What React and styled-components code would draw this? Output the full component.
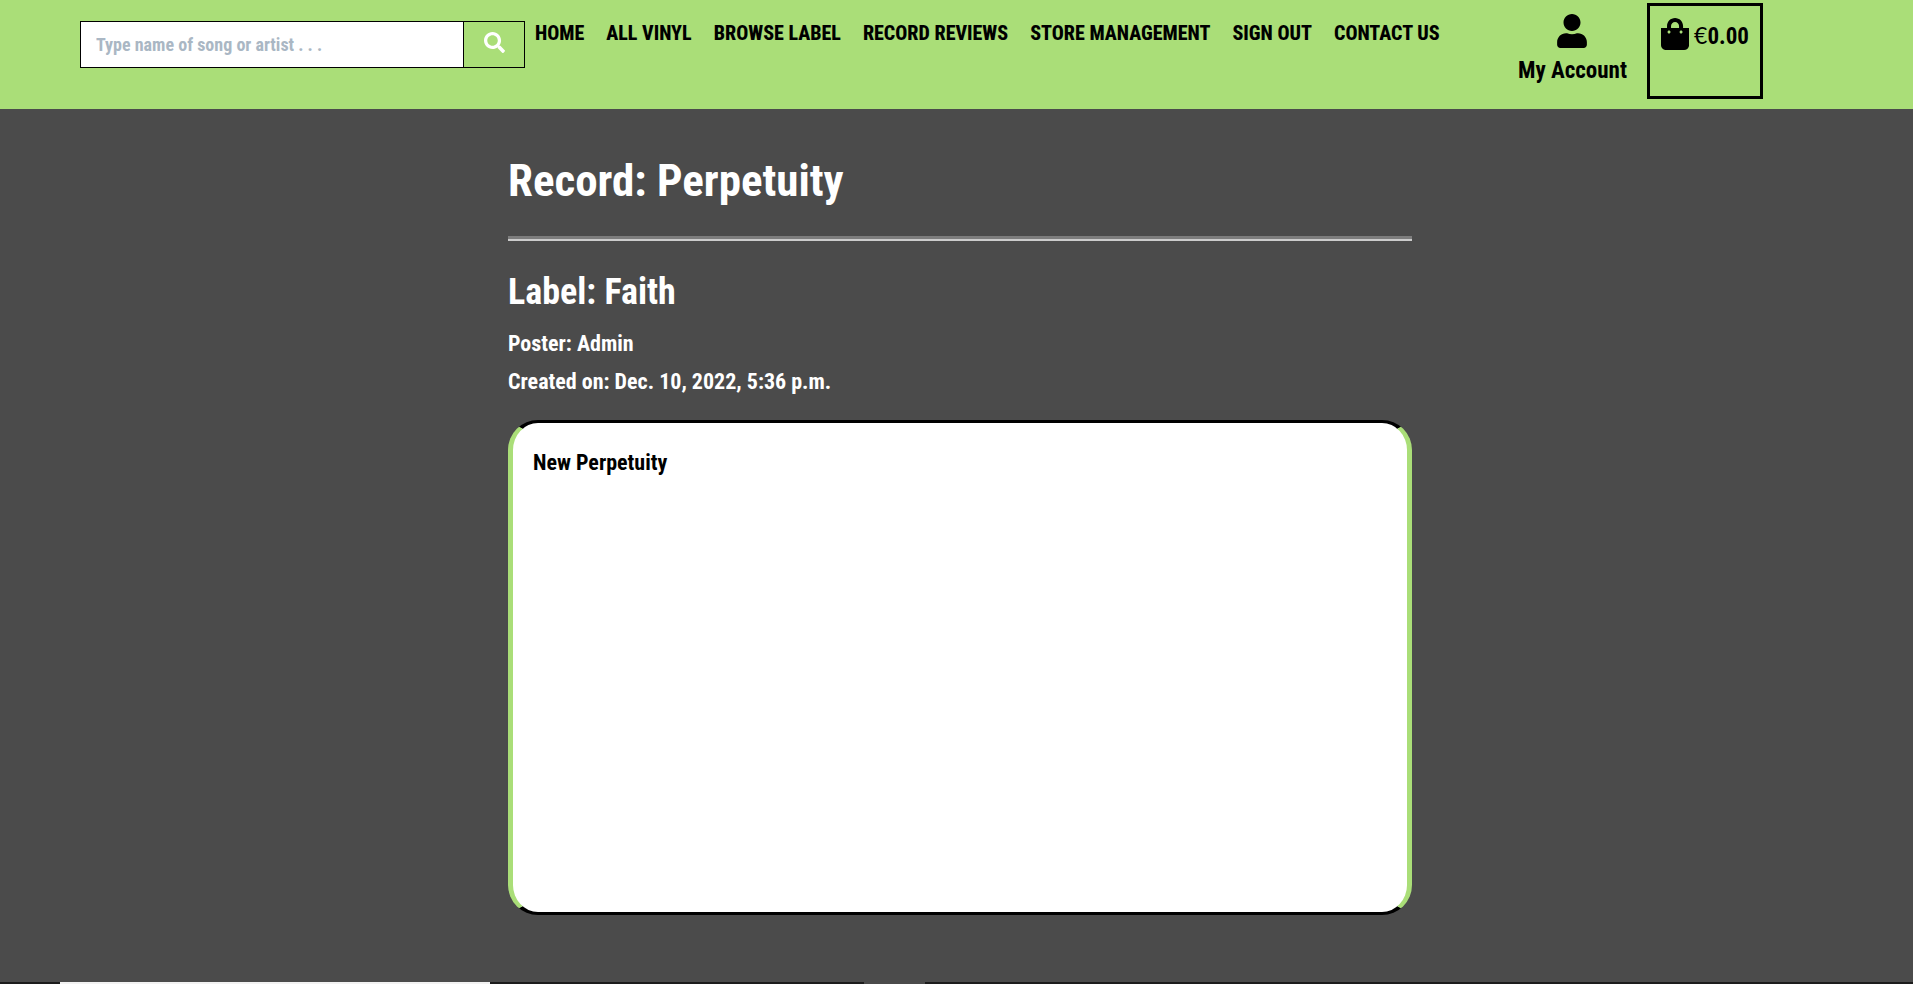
import React from "react";
import styled, { createGlobalStyle } from "styled-components";

const green = "#aade78";
const ink = "#000000";
const slate = "#4b4b4b";

const GlobalStyle = createGlobalStyle`
  *, *::before, *::after { box-sizing: border-box; }
  body {
    margin: 0;
    background: ${slate};
    color: #ffffff;
    font-family: "Roboto Condensed", "Liberation Sans Narrow", "Liberation Sans", sans-serif;
    font-weight: 700;
  }
  h1, h2, p, ul { margin: 0; padding: 0; }
`;

const Page = styled.div`
  min-height: 100vh;
  display: flex;
  flex-direction: column;
`;

const Header = styled.header`
  display: flex;
  align-items: flex-start;
  min-height: 109px;
  padding: 3px 150px 0 80px;
  background: ${green};
  color: ${ink};
`;

const SearchForm = styled.form`
  display: flex;
  flex: none;
  width: 445px;
  height: 47px;
  margin: 18px 10px 0 0;
  border: 1px solid ${ink};
`;

const SearchInput = styled.input`
  flex: 1;
  min-width: 0;
  padding: 0 15px;
  border: 0;
  background: #ffffff;
  color: ${ink};
  font: inherit;
  font-size: 18px;
  &::placeholder { color: #aab7c4; opacity: 1; }
`;

const SearchButton = styled.button`
  display: flex;
  align-items: center;
  justify-content: center;
  width: 61px;
  padding: 0 0 4px;
  border: 0;
  border-left: 1px solid ${ink};
  background: ${green};
  color: #ffffff;
`;

const NavList = styled.ul`
  display: flex;
  gap: 22px;
  padding-top: 15px;
  list-style: none;
  white-space: nowrap;
`;

const NavLink = styled.a`
  display: block;
  color: ${ink};
  font-size: 20px;
  font-weight: 800;
  line-height: 30px;
  text-decoration: none;
`;

const AccountLink = styled.a`
  display: flex;
  flex-direction: column;
  align-items: center;
  gap: 8px;
  margin-left: auto;
  padding-top: 11px;
  color: ${ink};
  font-size: 23px;
  line-height: 30px;
  text-decoration: none;
  white-space: nowrap;
`;

const BagLink = styled.a`
  display: flex;
  flex: none;
  align-items: flex-start;
  gap: 5px;
  width: 116px;
  height: 96px;
  margin-left: 20px;
  padding: 11px;
  border: 3px solid ${ink};
  color: ${ink};
  font-size: 23px;
  line-height: 36px;
  text-decoration: none;
`;

const Currency = styled.span`
  font-family: Lato, sans-serif;
  font-weight: 400;
`;

const Main = styled.main`
  flex: 1;
  padding: 43px 0 67px 7px;
`;

const Article = styled.article`
  max-width: 904px;
  margin: 0 auto;
`;

const Title = styled.h1`
  font-size: 45px;
  line-height: 58px;
`;

const Rule = styled.hr`
  height: 5px;
  margin: 26px 0;
  border: 0;
  border-top: 3px solid #7d7d7d;
  background: #cccccc;
`;

const Subtitle = styled.h2`
  font-size: 36px;
  line-height: 50px;
  margin-bottom: 8px;
`;

const Meta = styled.p`
  font-size: 22px;
  line-height: 38px;
`;

const Review = styled.section`
  min-height: 495px;
  margin-top: 19px;
  padding: 21px 20px;
  border: solid;
  border-width: 3px 5px;
  border-color: ${ink} ${green};
  border-radius: 30px;
  background: #ffffff;
  color: ${ink};
  font-size: 22px;
  line-height: 38px;
`;

const BottomStrip = styled.footer`
  display: grid;
  grid-template-columns: 60fr 430fr 374fr 61fr 988fr;
  height: 2px;
  background: #1c1c1c;
`;

const StripSegment = styled.div`
  grid-column: ${(p) => p.$column};
  background: ${(p) => p.$color};
`;

const links = ["HOME", "ALL VINYL", "BROWSE LABEL", "RECORD REVIEWS", "STORE MANAGEMENT", "SIGN OUT", "CONTACT US"];

function SearchIcon() {
  return (
    <svg width="21" height="21" viewBox="0 0 512 512" fill="currentColor" aria-hidden="true">
      <path d="M505 442.700 405.300 343c-4.500-4.500-10.600-7-17-7H372c27.600-35.300 44-79.700 44-128C416 93.100 322.900 0 208 0S0 93.100 0 208s93.100 208 208 208c48.300 0 92.700-16.400 128-44v16.300c0 6.400 2.500 12.500 7 17l99.700 99.700c9.400 9.400 24.600 9.400 33.900 0l28.300-28.300c9.400-9.400 9.400-24.600.1-34zM208 336c-70.700 0-128-57.200-128-128 0-70.700 57.200-128 128-128 70.700 0 128 57.200 128 128 0 70.700-57.200 128-128 128z" />
    </svg>
  );
}

function UserIcon() {
  return (
    <svg width="30" height="34" viewBox="0 0 448 512" fill="currentColor" aria-hidden="true">
      <path d="M224 256c70.700 0 128-57.300 128-128S294.700 0 224 0 96 57.300 96 128s57.300 128 128 128zm89.600 32h-16.700c-22.200 10.200-46.900 16-72.900 16s-50.600-5.800-72.900-16h-16.700C60.200 288 0 348.200 0 422.400V464c0 26.500 21.500 48 48 48h352c26.500 0 48-21.500 48-48v-41.600c0-74.200-60.200-134.400-134.400-134.400z" />
    </svg>
  );
}

function BagIcon() {
  return (
    <svg width="30" height="34" viewBox="0 0 448 512" fill="currentColor" aria-hidden="true">
      <path d="M352 160v-32C352 57.420 294.579 0 224 0 153.420 0 96 57.420 96 128v32H0v272c0 44.183 35.817 80 80 80h288c44.183 0 80-35.817 80-80V160h-96zm-192-32c0-35.290 28.710-64 64-64s64 28.710 64 64v32H160v-32zm160 120c-13.255 0-24-10.745-24-24s10.745-24 24-24 24 10.745 24 24-10.745 24-24 24zm-192 0c-13.255 0-24-10.745-24-24s10.745-24 24-24 24 10.745 24 24-10.745 24-24 24z" />
    </svg>
  );
}

export default function App() {
  return (
    <>
      <GlobalStyle />
      <Page>
        <Header>
          <SearchForm role="search" onSubmit={(e) => e.preventDefault()}>
            <SearchInput type="text" aria-label="Search records" placeholder="Type name of song or artist . . ." />
            <SearchButton type="submit" aria-label="Search">
              <SearchIcon />
            </SearchButton>
          </SearchForm>
          <nav>
            <NavList>
              {links.map((label) => (
                <li key={label}>
                  <NavLink href="#">{label}</NavLink>
                </li>
              ))}
            </NavList>
          </nav>
          <AccountLink href="#">
            <UserIcon />
            <span>My Account</span>
          </AccountLink>
          <BagLink href="#">
            <BagIcon />
            <span>
              <Currency>€</Currency>0.00
            </span>
          </BagLink>
        </Header>
        <Main>
          <Article>
            <Title>Record: Perpetuity</Title>
            <Rule />
            <Subtitle>Label: Faith</Subtitle>
            <Meta>Poster: Admin</Meta>
            <Meta>Created on: Dec. 10, 2022, 5:36 p.m.</Meta>
            <Review>
              <p>New Perpetuity</p>
            </Review>
          </Article>
        </Main>
        <BottomStrip>
          <StripSegment $column={2} $color="#f2f2f2" />
          <StripSegment $column={4} $color={slate} />
        </BottomStrip>
      </Page>
    </>
  );
}
